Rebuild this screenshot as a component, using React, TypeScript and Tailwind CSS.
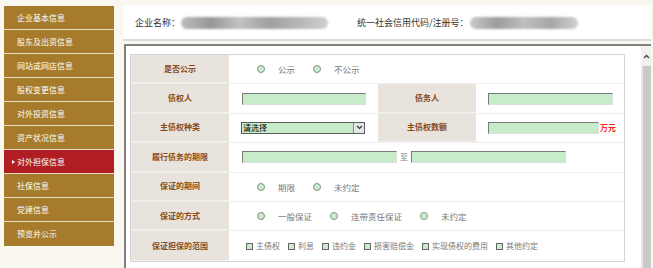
import React from "react";

const menu = [
  "企业基本信息",
  "股东及出资信息",
  "网站或网店信息",
  "股权变更信息",
  "对外投资信息",
  "资产状况信息",
  "对外担保信息",
  "社保信息",
  "党建信息",
  "预览并公示",
];

const font = { fontFamily: '"Noto Sans CJK SC", "Noto Sans", sans-serif' };

function Radio({ label }: { label: string }) {
  return (
    <span className="inline-flex items-center mr-[18px]">
      <span className="w-[8px] h-[8px] rounded-full border border-[#8c8c8c] bg-[#c8ecc9] mr-[13px]" />
      <span className="text-[8.5px] text-[#7a7a7a] leading-none">{label}</span>
    </span>
  );
}

function Check({ label }: { label: string }) {
  return (
    <span className="inline-flex items-center mr-[8px]">
      <span className="w-[7px] h-[7px] border border-[#666] bg-[#c8ecc9] mr-[3px]" />
      <span className="text-[8px] text-[#7a7a7a] leading-none">{label}</span>
    </span>
  );
}

function Input({ w }: { w: string }) {
  return (
    <span
      className={`${w} h-[12px] bg-[#c8ecc9] border border-t-[#7a7a7a] border-l-[#7a7a7a] border-r-[#dedede] border-b-[#dedede]`}
    />
  );
}

function Label({ text, w = "w-[98px]" }: { text: string; w?: string }) {
  return (
    <div
      className={`${w} shrink-0 h-full bg-[#e8e3dd] flex items-center justify-center text-[8px] font-bold text-[#8a4b16] border-b border-[#f3f0ec]`}
    >
      {text}
    </div>
  );
}

function Row({ children }: { children: React.ReactNode }) {
  return <div className="flex h-[29.4px] border-b border-[#eeeeee] box-border">{children}</div>;
}

export default function App() {
  return (
    <div className="w-[653px] h-[268px] bg-[#faf7f0] flex overflow-hidden" style={font}>
      {/* Sidebar */}
      <div className="ml-[4px] mt-[6px] w-[110px] flex flex-col self-start">
        {menu.map((m, i) => {
          const active = i === 6;
          return (
            <div
              key={m}
              className={`h-[24px] flex items-center text-[8px] text-white ${
                active ? "bg-[#b01d22]" : "bg-[#a67b2c]"
              } ${i < menu.length - 1 ? "border-b border-[#eadcc0]" : ""}`}
            >
              <span className="w-[13px] flex justify-end pr-[2px]">
                {active && (
                  <span className="w-0 h-0 border-y-[2.5px] border-y-transparent border-l-[3.5px] border-l-white" />
                )}
              </span>
              <span className="leading-none">{m}</span>
            </div>
          );
        })}
      </div>

      {/* Main */}
      <div className="ml-[9px] mt-[6px] w-[528px] flex flex-col">
        <div className="h-[35px] bg-white border-b-2 border-[#dcdcdc] flex items-center pl-[12px] text-[9px] text-[#333]">
          <span>企业名称：</span>
          <span className="ml-[1px] w-[147px] h-[12px] rounded-full blur-[1.2px] bg-[linear-gradient(90deg,#bdbdbd,#979797_20%,#c2c2c2_40%,#a0a0a0_60%,#b6b6b6_80%,#cfcfcf)]" />
          <span className="ml-[29px]">统一社会信用代码/注册号：</span>
          <span className="ml-[1px] w-[108px] h-[12px] rounded-full blur-[1.2px] bg-[linear-gradient(90deg,#c8c8c8,#9c9c9c_25%,#bfbfbf_50%,#a6a6a6_75%,#d0d0d0)]" />
        </div>

        <div className="mt-[3px] ml-[1px] flex-1 bg-white border-l-2 border-t-2 border-[#808080] flex">
          <div className="pl-[4px] pt-[8px]">
            <div className="w-[495px] border border-[#d4d4d4]">
              <Row>
                <Label text="是否公示" />
                <div className="flex-1 flex items-center pl-[28px]">
                  <Radio label="公示" />
                  <Radio label="不公示" />
                </div>
              </Row>
              <Row>
                <Label text="债权人" />
                <div className="w-[149px] flex items-center pl-[13px]">
                  <Input w="w-[124px]" />
                </div>
                <Label text="债务人" />
                <div className="flex-1 flex items-center pl-[12px]">
                  <Input w="w-[125px]" />
                </div>
              </Row>
              <Row>
                <Label text="主债权种类" />
                <div className="w-[149px] flex items-center pl-[12px]">
                  <div className="w-[124px] h-[12px] bg-[#c8ecc9] border border-[#5a5a5a] flex items-center">
                    <span className="flex-1 text-[8px] leading-none text-black pl-[1px]">请选择</span>
                    <span className="w-[11px] h-[10px] bg-[#e6e6e6] border-l border-[#8a8a8a] flex items-center justify-center">
                      <svg width="7" height="5" viewBox="0 0 7 5">
                        <path d="M1 1 L3.5 3.5 L6 1" fill="none" stroke="#333" strokeWidth="1.2" />
                      </svg>
                    </span>
                  </div>
                </div>
                <Label text="主债权数额" />
                <div className="flex-1 flex items-center pl-[12px]">
                  <Input w="w-[111px]" />
                  <span className="ml-[1px] text-[8px] font-bold text-[#ff2424] leading-none">万元</span>
                </div>
              </Row>
              <Row>
                <Label text="履行债务的期限" />
                <div className="flex-1 flex items-center pl-[13px]">
                  <Input w="w-[155px]" />
                  <span className="mx-[3px] text-[8px] text-[#777] leading-none">至</span>
                  <Input w="w-[155px]" />
                </div>
              </Row>
              <Row>
                <Label text="保证的期间" />
                <div className="flex-1 flex items-center pl-[28px]">
                  <Radio label="期限" />
                  <Radio label="未约定" />
                </div>
              </Row>
              <Row>
                <Label text="保证的方式" />
                <div className="flex-1 flex items-center pl-[28px]">
                  <Radio label="一般保证" />
                  <Radio label="连带责任保证" />
                  <Radio label="未约定" />
                </div>
              </Row>
              <div className="flex h-[29.4px]">
                <Label text="保证担保的范围" />
                <div className="flex-1 flex items-center pl-[17px]">
                  <Check label="主债权" />
                  <Check label="利息" />
                  <Check label="违约金" />
                  <Check label="损害赔偿金" />
                  <Check label="实现债权的费用" />
                  <Check label="其他约定" />
                </div>
              </div>
            </div>
          </div>
          {/* scrollbar */}
          <div className="ml-auto w-[10px] flex flex-col">
            <div className="h-[20px] bg-[#f1f1f1] flex items-center justify-center">
              <svg width="7" height="5" viewBox="0 0 7 5">
                <path d="M1 4 L3.5 1.5 L6 4" fill="none" stroke="#444" strokeWidth="1.3" />
              </svg>
            </div>
            <div className="flex-1 bg-[#c9c9c9] border-l-2 border-[#e6e6e6]" />
          </div>
        </div>
      </div>
    </div>
  );
}
